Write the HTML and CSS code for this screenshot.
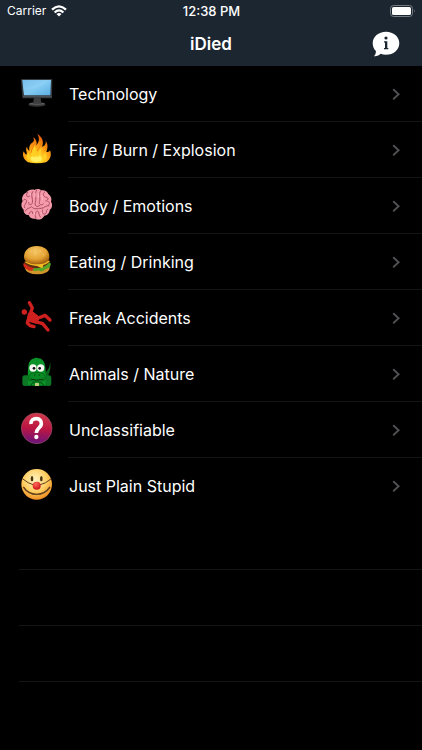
FILE: index.html
```
<!DOCTYPE html>
<html lang="en">

<head>
    <meta charset="utf-8">
    <meta name="viewport" content="width=device-width">
    <title>iDied</title>
    <link rel="stylesheet" href="styles.css">
</head>

<body>
    <svg width="0" height="0" class="defs" aria-hidden="true">
        <symbol id="chevron" viewBox="0 0 8 13">
            <path d="M1.2 1.2 L6.6 6.2 L1.2 11.2" fill="none" stroke="#505054" stroke-width="1.9"/>
        </symbol>
    </svg>

    <header class="header">
        <div class="status">
            <span class="carrier">Carrier
                <svg width="16" height="12" viewBox="0 0 16 12">
                    <g fill="none" stroke="#fff" stroke-width="2.3">
                        <path d="M1 4.6 Q8 -1.8 15 4.6"/>
                        <path d="M3.6 7.5 Q8 3.3 12.4 7.5"/>
                    </g>
                    <path d="M5.5 9 Q8 7 10.5 9 L8 11.6 Z" fill="#fff"/>
                </svg>
            </span>
            <span class="clock">12:38 PM</span>
            <span class="battery">
                <svg width="26" height="12" viewBox="0 0 26 12">
                    <rect x="0.5" y="0.5" width="22" height="11" rx="3" fill="none" stroke="#747b82"/>
                    <rect x="2" y="2" width="19" height="8" rx="1.6" fill="#fff"/>
                    <path d="M24 4 Q25.4 6 24 8 Z" fill="#747b82"/>
                </svg>
            </span>
        </div>
        <div class="navbar">
            <h1 class="title">iDied</h1>
            <button class="info" type="button" aria-label="Info">
                <svg width="28" height="26" viewBox="0 0 28 26">
                    <path d="M14 0.8 C21.5 0.8 27.3 5.8 27.3 12.2 C27.3 18.7 21.5 23.8 14 23.8 C12 23.8 10.2 23.5 8.6 22.8 C7.2 24.4 4.6 25.5 1.9 25.2 C3.3 23.9 4 22.2 3.9 20 C1.8 18 0.7 15.2 0.7 12.2 C0.7 5.8 6.5 0.8 14 0.8 Z" fill="#fff"/>
                    <circle cx="14" cy="7" r="1.6" fill="#1c2631"/>
                    <path d="M12 10.2 H15.3 V17 H16.3 V18.2 H12 V17 H13 V11.4 H12 Z" fill="#1c2631"/>
                </svg>
            </button>
        </div>
    </header>

    <ul class="list">
        <li>
            <a class="row" href="#technology">
                <svg class="icon" viewBox="0 0 150 150">
                    <defs>
                        <linearGradient id="screen" x1="0" y1="0" x2="1" y2="1">
                            <stop offset="0" stop-color="#5fafe4"/>
                            <stop offset="0.5" stop-color="#83cbf3"/>
                            <stop offset="1" stop-color="#5aade3"/>
                        </linearGradient>
                    </defs>
                    <ellipse cx="75" cy="107" rx="26" ry="6" fill="#353535"/>
                    <ellipse cx="75" cy="104" rx="24" ry="4" fill="#5a5a5a"/>
                    <path d="M66 86 H86 L88 104 H63 Z" fill="#3d3d3f"/>
                    <path d="M29 30 H119 Q121 30 121 33 L120 86 Q120 88 117 88 H34 Q31 88 31 85 L27 33 Q27 30 29 30 Z" fill="#343a40"/>
                    <path d="M31 33 H117 L115 79 H36 Z" fill="url(#screen)"/>
                    <path d="M31 33 H112 Q86 58 34 65 Z" fill="#a2dafa" opacity="0.35"/>
                    <path d="M33 83 H118" stroke="#5c6368" stroke-width="2"/>
                </svg>
                <span class="name">Technology</span>
                <svg class="arrow"><use href="#chevron"/></svg>
            </a>
        </li>
        <li>
            <a class="row" href="#fire">
                <svg class="icon" viewBox="0 0 150 150">
                    <defs>
                        <radialGradient id="flame" cx="0.5" cy="0.9" r="0.85">
                            <stop offset="0" stop-color="#ffe32c"/>
                            <stop offset="0.45" stop-color="#ffb018"/>
                            <stop offset="1" stop-color="#e65a09"/>
                        </radialGradient>
                    </defs>
                    <path d="M48 112 C34 103 30 90 35 79 C38 85 40 88 43 89 C48 82 38 75 45 65 C47 73 49 76 52 77 C50 64 55 56 63 51 C69 46 63 42 65 37 C73 45 76 52 73 61 C81 51 84 41 76 27 C90 35 97 50 90 65 C97 63 103 57 101 47 C109 58 107 70 103 80 C108 82 111 81 114 76 C120 89 115 105 102 112 Q75 118 48 112 Z" fill="url(#flame)"/>
                    <path d="M54 109 C42 101 43 91 50 82 C51 90 54 93 57 93 C57 78 64 73 66 60 C73 69 75 79 72 89 C80 82 82 74 88 68 C85 80 88 86 91 92 C96 91 97 86 99 82 C108 95 104 105 94 110 Q74 115 54 109 Z" fill="#ffcf23"/>
                    <path d="M61 109 C53 103 57 96 61 93 C65 99 69 98 71 92 C77 97 80 97 83 90 C89 97 93 104 86 109 Q74 113 61 109 Z" fill="#ffef61"/>
                    <g fill="none" stroke="#ef790b" stroke-width="2.5">
                        <path d="M58 83 C57 71 67 66 66 56"/>
                        <path d="M76 78 C78 69 88 65 88 53"/>
                        <path d="M97 79 C103 72 104 66 102 58"/>
                    </g>
                </svg>
                <span class="name">Fire / Burn / Explosion</span>
                <svg class="arrow"><use href="#chevron"/></svg>
            </a>
        </li>
        <li>
            <a class="row" href="#body">
                <svg class="icon" viewBox="0 0 150 150">
                    <path d="M44 34 C49 26 61 24 67 27 C74 22 83 24 88 28 C97 26 106 31 109 39 C118 45 120 55 117 62 C123 71 120 82 113 87 C113 97 105 104 97 104 C91 115 78 119 71 113 C61 115 52 110 50 102 C41 102 34 95 35 86 C27 80 26 68 32 61 C27 51 34 38 44 34 Z" fill="#f59aaa"/>
                    <g fill="none" stroke="#a84c60" stroke-width="3" stroke-linecap="round">
                        <path d="M47 34 C39 44 46 52 53 45"/>
                        <path d="M62 32 C54 45 64 50 61 65 C59 74 49 73 50 65"/>
                        <path d="M74 27 C66 41 75 50 70 64 C67 76 77 81 83 73"/>
                        <path d="M86 29 C78 42 87 52 82 62 C80 69 87 76 94 69"/>
                        <path d="M98 33 C89 40 96 48 103 49 C112 49 108 60 101 60"/>
                        <path d="M35 57 C40 52 46 57 43 63 C40 72 34 73 38 80"/>
                        <path d="M40 90 C46 79 55 82 59 77 C66 87 77 82 87 82 C98 82 101 72 111 74"/>
                        <path d="M51 99 C55 88 64 88 62 98 M72 111 C65 100 72 91 77 90 C83 92 78 101 85 108"/>
                        <path d="M92 87 C88 95 93 102 100 98 C107 94 99 87 107 85 M107 61 C114 63 114 69 110 72"/>
                    </g>
                    <g fill="none" stroke="#ffb9c5" stroke-width="3" stroke-linecap="round">
                        <path d="M69 37 V47 M80 40 V49 M55 38 V43 M53 60 V57 M90 45 L91 56 M67 95 V101 M88 94 V98"/>
                    </g>
                </svg>
                <span class="name">Body / Emotions</span>
                <svg class="arrow"><use href="#chevron"/></svg>
            </a>
        </li>
        <li>
            <a class="row" href="#eating">
                <svg class="icon" viewBox="0 0 150 150">
                    <defs>
                        <radialGradient id="bun" cx="0.45" cy="0.3" r="0.7">
                            <stop offset="0" stop-color="#f5c666"/>
                            <stop offset="0.6" stop-color="#e5a333"/>
                            <stop offset="1" stop-color="#a35f0d"/>
                        </radialGradient>
                    </defs>
                    <ellipse cx="76" cy="92" rx="37" ry="20" fill="#d3942b"/>
                    <path d="M35 78 C32 86 37 94 47 98 Q56 105 66 98 L68 86 Z" fill="#d12b18"/>
                    <path d="M61 98 C70 107 78 96 86 103 C96 105 100 94 109 94 C117 89 118 81 114 76 L75 88 Z" fill="#56a526"/>
                    <path d="M36 76 Q47 93 74 94 Q102 92 115 73 L110 67 H42 Z" fill="#5e3011"/>
                    <path d="M38 75 Q53 86 75 87 L91 94 L94 84 Q109 80 113 72 L74 67 Z" fill="#f4bd25"/>
                    <path d="M36 60 C36 40 51 27 74 27 C98 27 112 41 112 59 C112 76 95 82 74 82 C53 82 36 75 36 60 Z" fill="url(#bun)"/>
                    <g fill="#f8d999">
                        <circle cx="57" cy="43" r="1.6"/>
                        <circle cx="70" cy="36" r="1.6"/>
                        <circle cx="84" cy="42" r="1.6"/>
                        <circle cx="70" cy="51" r="1.6"/>
                        <circle cx="94" cy="53" r="1.6"/>
                    </g>
                </svg>
                <span class="name">Eating / Drinking</span>
                <svg class="arrow"><use href="#chevron"/></svg>
            </a>
        </li>
        <li>
            <a class="row" href="#accidents">
                <svg class="icon" viewBox="0 0 150 150">
                    <circle cx="37" cy="57" r="8" fill="#cf2020"/>
                    <g fill="none" stroke="#cf2020" stroke-width="10" stroke-linecap="round" stroke-linejoin="round">
                        <path d="M52 29 L61 45 L55 61"/>
                        <path d="M51 72 L46 90 L54 98 L66 101"/>
                        <path d="M72 78 L99 67 L114 81"/>
                        <path d="M68 85 L92 92 L108 111"/>
                    </g>
                    <path d="M49 61 L60 55 L83 73 L73 91 L46 84 Z" fill="#cf2020" stroke="#cf2020" stroke-width="3" stroke-linejoin="round"/>
                </svg>
                <span class="name">Freak Accidents</span>
                <svg class="arrow"><use href="#chevron"/></svg>
            </a>
        </li>
        <li>
            <a class="row" href="#animals">
                <svg class="icon" viewBox="0 0 150 150">
                    <path d="M97 94 C110 83 119 61 114 38 C114 57 105 67 97 73 Z" fill="#08651a"/>
                    <path d="M72 25 L79 32 H66 Z" fill="#0b8d23"/>
                    <rect x="31" y="79" width="20" height="32" rx="7" fill="#0c7724"/>
                    <rect x="98" y="79" width="20" height="32" rx="7" fill="#0c7724"/>
                    <path d="M48 110 C48 88 46 70 49 51 C51 34 61 27 74 27 C90 27 98 37 100 53 C102 70 101 90 101 110 Z" fill="#0a9328"/>
                    <path d="M50 92 C47 80 56 70 75 70 C95 70 103 80 99 92 C91 99 59 99 50 92 Z" fill="#0a8a25" stroke="#04560f" stroke-width="2"/>
                    <circle cx="63" cy="57" r="11" fill="#f5f7f3"/>
                    <circle cx="86" cy="57" r="11" fill="#f5f7f3"/>
                    <circle cx="66" cy="58" r="4" fill="#111"/>
                    <circle cx="83" cy="58" r="4" fill="#111"/>
                    <circle cx="68" cy="78" r="2" fill="#03490d"/>
                    <circle cx="82" cy="78" r="2" fill="#03490d"/>
                    <path d="M55 90 Q75 97 95 90" fill="none" stroke="#03380a" stroke-width="3"/>
                    <path d="M57 111 C57 101 66 99 72 104 M78 104 C85 99 94 101 94 111" fill="none" stroke="#03490d" stroke-width="3"/>
                    <rect x="69" y="102" width="12" height="9" fill="#bdcc77"/>
                </svg>
                <span class="name">Animals / Nature</span>
                <svg class="arrow"><use href="#chevron"/></svg>
            </a>
        </li>
        <li>
            <a class="row" href="#unclassifiable">
                <svg class="icon" viewBox="0 0 150 150">
                    <defs>
                        <linearGradient id="ball" x1="0.5" y1="0" x2="0.4" y2="1">
                            <stop offset="0" stop-color="#d13a4b"/>
                            <stop offset="0.5" stop-color="#bb1642"/>
                            <stop offset="1" stop-color="#68147e"/>
                        </linearGradient>
                    </defs>
                    <circle cx="74" cy="70" r="46" fill="url(#ball)" stroke="#9a5368" stroke-width="2"/>
                    <path d="M57 57 C56 45 64 41 73 41 C83 41 89 48 88 57 C87 69 74 68 73 84" fill="none" stroke="#fff" stroke-width="11"/>
                    <circle cx="73" cy="96" r="6.5" fill="#fff"/>
                </svg>
                <span class="name">Unclassifiable</span>
                <svg class="arrow"><use href="#chevron"/></svg>
            </a>
        </li>
        <li>
            <a class="row" href="#stupid">
                <svg class="icon" viewBox="0 0 150 150">
                    <defs>
                        <radialGradient id="face" cx="0.45" cy="0.35" r="0.65">
                            <stop offset="0" stop-color="#fff3c1"/>
                            <stop offset="0.6" stop-color="#ffcd60"/>
                            <stop offset="1" stop-color="#ed8e22"/>
                        </radialGradient>
                        <radialGradient id="nose" cx="0.4" cy="0.3" r="0.7">
                            <stop offset="0" stop-color="#ff6b58"/>
                            <stop offset="1" stop-color="#ce1119"/>
                        </radialGradient>
                    </defs>
                    <circle cx="74" cy="70" r="46" fill="url(#face)"/>
                    <ellipse cx="60" cy="53" rx="4" ry="8" fill="#4b3511"/>
                    <ellipse cx="88" cy="53" rx="4" ry="8" fill="#4b3511"/>
                    <path d="M31 53 Q49 68 66 72 M82 72 Q101 68 118 53" fill="none" stroke="#5d3f1c" stroke-width="3"/>
                    <path d="M34 78 Q49 100 74 100 Q99 100 114 78" fill="none" stroke="#5d3f1c" stroke-width="4"/>
                    <circle cx="74" cy="74" r="12" fill="url(#nose)"/>
                </svg>
                <span class="name">Just Plain Stupid</span>
                <svg class="arrow"><use href="#chevron"/></svg>
            </a>
        </li>
        <li class="empty"></li>
        <li class="empty"></li>
        <li class="empty"></li>
    </ul>
</body>

</html>
```
FILE: styles.css
```
* {
    box-sizing: border-box;
}

body {
    margin: 0;
    background-color: #000;
    font-family: Inter, "Liberation Sans", sans-serif;
    color: #fff;
}

svg {
    display: block;
}

.defs {
    position: absolute;
}

.header {
    background-color: #1c2631;
}

.status {
    display: grid;
    grid-template-columns: 1fr auto 1fr;
    align-items: center;
    height: 22px;
    padding: 0 6px 0 7px;
    font-size: 12px;
    line-height: 22px;
}

.carrier {
    display: flex;
    align-items: center;
    gap: 5px;
}

.clock {
    font-size: 13px;
    font-weight: 500;
}

.battery {
    justify-self: end;
}

.navbar {
    display: grid;
    grid-template-columns: 1fr auto 1fr;
    align-items: center;
    height: 44px;
    padding: 0 22px;
}

.title {
    grid-column: 2;
    margin: 0;
    font-size: 17px;
    font-weight: 600;
    line-height: 24px;
}

.info {
    justify-self: end;
    padding: 0;
    border: none;
    background: none;
}

.list {
    margin: 0;
    padding: 0;
    list-style: none;
}

.row {
    display: flex;
    align-items: center;
    height: 56px;
    padding-left: 12px;
    padding-right: 22px;
    background: linear-gradient(#151518, #151518) 68px 100% / 100% 1px no-repeat;
    color: #fff;
    text-decoration: none;
}

/* no line between the last row and the empty ones */
li:nth-last-child(4) .row {
    background: none;
}

.icon {
    flex: none;
    width: 50px;
    height: 50px;
}

.name {
    flex: 1;
    padding-left: 7px;
    font-size: 16px;
    line-height: 24px;
}

.arrow {
    width: 8px;
    height: 13px;
}

.empty {
    height: 56px;
    margin-left: 19px;
    border-bottom: 1px solid #151518;
}
```
